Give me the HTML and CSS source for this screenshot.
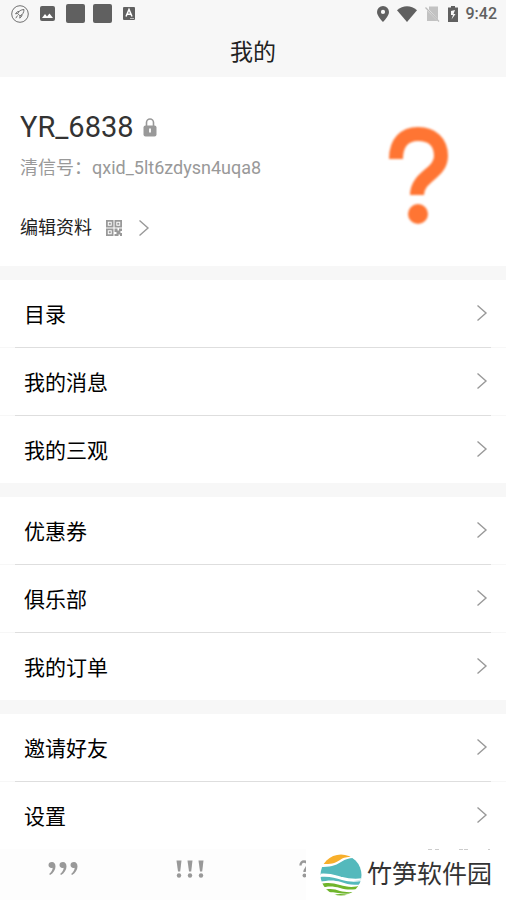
FILE: index.html
```html
<!DOCTYPE html>
<html lang="zh-CN">
<head>
<meta charset="utf-8">
<meta name="viewport" content="width=device-width, initial-scale=1">
<title>我的</title>
<link rel="stylesheet" href="styles.css">
</head>
<body>
<svg class="defs" aria-hidden="true">
  <symbol id="chevron" viewBox="0 0 12 18"><path d="M1.500 1.500 10 9l-8.500 7.500" fill="none" stroke="currentColor" stroke-width="1.400"/></symbol>
  <symbol id="comma" viewBox="0 0 10 16"><path d="M4 1C1.800 1 .5 2.300.5 4.100c0 1.700 1.200 2.900 3 2.900.5 0 .9-.1 1.200-.2-.2 2.500-1.300 4.400-3.500 6.200l.8 1C5.300 12 7.500 8.900 7.500 5.400 7.500 2.700 6.100 1 4 1z" fill="currentColor"/></symbol>
  <symbol id="bang" viewBox="0 0 8 18"><path d="M1.500.5h5L5.200 11.500H3z" fill="currentColor"/><circle cx="4" cy="15.500" r="2.200" fill="currentColor"/></symbol>
  <symbol id="query" viewBox="0 0 10 18"><path d="M1.500 5.500C1.500 3 3 1.500 5 1.500s3.500 1.400 3.500 3.600c0 3-3 3.400-3 6.900" fill="none" stroke="currentColor" stroke-width="2.400"/><circle cx="5.500" cy="15.500" r="2" fill="currentColor"/></symbol>
</svg>

<header class="header">
  <div class="status">
    <div class="status-left">
      <svg width="18" height="18" viewBox="0 0 18 18"><circle cx="9" cy="9" r="8.300" fill="none" stroke="#707070"/><path d="M13 4.500c-3 .2-5.200 1.500-6.300 4L9 10.900c2.700-1.200 3.900-3.400 4-6.400zM6.700 8.500 4.500 8.800l2-2.200 1.500-.1M9 10.900l-.2 2.300 2-2.200.2-1.600M6.500 10.500 4.800 13.200" fill="none" stroke="#707070"/></svg>
      <svg width="15" height="15" viewBox="0 0 15 15"><rect width="15" height="15" rx="2" fill="#606060"/><path d="m2 12 3-4 2 2.500L9.500 7.500 13 12z" fill="#fff"/></svg>
      <span class="blocks"><i></i><i></i></span>
      <svg width="12" height="13" viewBox="0 0 12 13"><rect width="12" height="13" rx="1" fill="#606060"/><path d="m3 9.500 3-7 3 7M4.200 7.300h3.600" fill="none" stroke="#fff" stroke-width="1.500"/><path d="M7 11.500h4" stroke="#bbb"/></svg>
    </div>
    <div class="status-right">
      <svg width="12" height="16" viewBox="0 0 12 16"><path d="M6 0a6 6 0 0 0-6 6c0 4.200 6 10 6 10s6-5.800 6-10a6 6 0 0 0-6-6zm0 3.800a2.100 2.100 0 1 1 0 4.200 2.100 2.100 0 0 1 0-4.200z" fill="#606060"/></svg>
      <svg width="20" height="16" viewBox="0 0 20 16"><path d="M0 4.200C6-1 14-1 20 4.200L10 16z" fill="#606060"/></svg>
      <svg width="15" height="16" viewBox="0 0 15 16"><path d="M4 .5h9v13L4 3.500zM2 4.500 12.500 15H2z" fill="#c2c2c2"/><path d="m.5 1.500 13.500 14" stroke="#bbb" stroke-width="1.200"/></svg>
      <svg width="10" height="16" viewBox="0 0 10 16"><path d="M3 0h4v1.500h3V16H0V1.500h3z" fill="#606060"/><path d="M7 4 3 5v4h2L3.500 13.500 7.500 8h-2z" fill="#f7f7f7"/></svg>
      <span class="clock">9:42</span>
    </div>
  </div>
  <h1 class="title">我的</h1>
</header>

<main>
  <section class="profile">
    <div class="info">
      <h2 class="name">YR_6838
        <svg width="14" height="19" viewBox="0 0 14 19"><path d="M3.500 9V4.500a3.500 3.500 0 0 1 7 0V9" fill="none" stroke="#999" stroke-width="1.600"/><rect x=".5" y="7.500" width="13" height="11" rx="2" fill="#999"/><path d="M7 10.500v4" stroke="#fff" stroke-width="1.800"/></svg>
      </h2>
      <p class="account">清信号：qxid_5lt6zdysn4uqa8</p>
      <a class="edit" href="#edit">编辑资料
        <svg class="qr" width="16" height="16" viewBox="0 0 16 16"><g fill="none" stroke="#999" stroke-width="1.800"><path d="M.9.9h5.700v5.700H.9zM9.400.9h5.700v5.700H9.400zM.9 9.400h5.700v5.700H.9z"/></g><path d="M2.800 2.800h2v2h-2zM11.300 2.800h2v2h-2zM2.800 11.300h2v2h-2zM8.500 8.500h3v2h1.500v-2h3v2.500h-1.500v2H16v3h-2v-1.500h-1.500V16h-4v-2h2v-2h-2z" fill="#999"/></svg>
        <svg class="chevron" width="12" height="18"><use href="#chevron"/></svg>
      </a>
    </div>
    <svg class="avatar" width="80" height="120" viewBox="0 0 80 120" role="img" aria-label="头像"><path d="M18 50C18 33 27 25 40 25c14 0 23 8 23 22 0 18-24 20-24 39" fill="none" stroke="#ff7533" stroke-width="14"/><circle cx="40" cy="105" r="10" fill="#ff7533"/></svg>
  </section>

  <nav class="group">
    <a class="row" href="#catalog">目录<svg class="chevron" width="12" height="18"><use href="#chevron"/></svg></a>
    <a class="row" href="#messages">我的消息<svg class="chevron" width="12" height="18"><use href="#chevron"/></svg></a>
    <a class="row" href="#views">我的三观<svg class="chevron" width="12" height="18"><use href="#chevron"/></svg></a>
  </nav>
  <nav class="group">
    <a class="row" href="#coupons">优惠券<svg class="chevron" width="12" height="18"><use href="#chevron"/></svg></a>
    <a class="row" href="#club">俱乐部<svg class="chevron" width="12" height="18"><use href="#chevron"/></svg></a>
    <a class="row" href="#orders">我的订单<svg class="chevron" width="12" height="18"><use href="#chevron"/></svg></a>
  </nav>
  <nav class="group">
    <a class="row" href="#invite">邀请好友<svg class="chevron" width="12" height="18"><use href="#chevron"/></svg></a>
    <a class="row" href="#settings">设置<svg class="chevron" width="12" height="18"><use href="#chevron"/></svg></a>
  </nav>
</main>

<footer class="tabs">
  <button class="tab" aria-label="评论"><svg width="32" height="18" viewBox="0 0 32 18"><use href="#comma" width="10" height="16" x="1" y="1"/><use href="#comma" width="10" height="16" x="12" y="1"/><use href="#comma" width="10" height="16" x="23" y="1"/></svg></button>
  <button class="tab" aria-label="动态"><svg width="30" height="18" viewBox="0 0 30 18"><use href="#bang" width="8" height="18" x="0"/><use href="#bang" width="8" height="18" x="11"/><use href="#bang" width="8" height="18" x="22"/></svg></button>
  <button class="tab" aria-label="问答"><svg width="34" height="18" viewBox="0 0 34 18"><use href="#query" width="10" height="18"/><use href="#query" width="10" height="18" x="12"/><use href="#query" width="10" height="18" x="24"/></svg></button>
  <button class="tab" aria-label="我的"></button>
  <div class="brand">
    <svg width="42" height="42" viewBox="0 0 42 42" aria-hidden="true">
      <clipPath id="disc"><circle cx="21" cy="21" r="20.500"/></clipPath>
      <g clip-path="url(#disc)">
        <path d="M0 0h42v42H0z" fill="#fff"/>
        <path d="M3 10C11 10 14 10 20 6c4-3 7-3 11-3V0H3z" fill="#f8af2b"/>
        <path d="M0 13c10 0 15-1 21-5 5-3 8-4 12-4l9 6v16c-8 1-14-1-22-3-7-2-13-3-20-2z" fill="#54b9bc"/>
        <path d="M0 23c9-1 15 1 22 3 7 2 13 2 20 1v3c-9 2-15 0-21-2-7-2-13-2-21 0z" fill="#54b9bc"/>
        <path d="M0 20.500c9-1 14 1 21 3 8 2 13 2.500 21 1.500" fill="none" stroke="#fff" stroke-width="1.500"/>
        <path d="M0 30c8-2 13-1 20 1 7 2 13 3 22 0v3c-9 2-15 2-22 0-7-2-12-2-20 0z" fill="#6fb52c"/>
        <path d="M3 36c7-2 12-1 17 1 5 1 10 2 19 0l-3 2c-7 1-13 1-18 0-5-1-8-1-12 0zM14 41c4-1.500 9-1 15 0v2H14z" fill="#6fb52c"/>
      </g>
    </svg>
    <span>竹笋软件园</span>
    <svg class="specks" width="64" height="2" viewBox="0 0 64 2" aria-hidden="true"><path d="M0 .5h4M7 .5h4M31 .5h4M36 .5h4M60 .5h2" stroke="#ccc"/></svg>
  </div>
</footer>
</body>
</html>
```
FILE: styles.css
```css
* { box-sizing: border-box; }
body {
  margin: 0;
  background: #f7f7f7;
  color: #000;
  font-family: Roboto, "Noto Sans CJK SC", sans-serif;
}
a { color: inherit; text-decoration: none; }
h1, h2, p { margin: 0; font-weight: 400; }
svg { display: block; flex: none; }
.defs { display: none; }

.header { background: #f7f7f7; }
.status {
  display: flex;
  justify-content: space-between;
  align-items: center;
  height: 27px;
  padding: 0 9px 0 11px;
}
.status-left { display: flex; align-items: center; gap: 11px; }
.blocks { display: flex; gap: 8px; }
.blocks i { width: 19px; height: 19px; border-radius: 2px; background: #606060; }
.status-right { display: flex; align-items: center; gap: 8px; }
.clock { color: #606060; font-size: 16px; font-weight: 500; line-height: 20px; }
.title {
  padding-top: 2px;
  color: #222;
  font-size: 23px;
  line-height: 48px;
  text-align: center;
}

.profile {
  display: flex;
  justify-content: space-between;
  align-items: flex-start;
  padding: 32px 48px 24px 20px;
  background: #fff;
}
.name {
  display: flex;
  align-items: center;
  gap: 9px;
  color: #333;
  font-size: 29px;
  line-height: 36px;
}
.account { margin-top: 10px; color: #999; font-size: 18px; line-height: 26px; }
.edit {
  display: flex;
  align-items: center;
  margin-top: 33px;
  color: #222;
  font-size: 18px;
  line-height: 28px;
}
.qr { margin: 0 16px 0 14px; }
.chevron { color: #999; }
.avatar { filter: blur(1px); }

.group { margin-top: 14px; background: #fff; }
.row {
  display: flex;
  justify-content: space-between;
  align-items: center;
  height: 67px;
  padding: 0 18px 1px 24px;
  font-size: 21px;
}
.row + .row {
  height: 68px;
  border-top: 1px solid #dedede;
  border-image: linear-gradient(to right, #f7f7f7 16px, #dedede 16px calc(100% - 16px), #f7f7f7 calc(100% - 16px)) 1;
}

.tabs {
  position: sticky;
  bottom: 0;
  display: flex;
  height: 51px;
  background: #fdfdfd;
}
.tab {
  display: flex;
  flex: 1;
  justify-content: center;
  align-items: center;
  padding: 0 0 11px;
  border: 0;
  background: none;
  color: #999;
}
.brand {
  position: absolute;
  right: 0;
  bottom: 0;
  display: flex;
  align-items: center;
  gap: 5px;
  height: 51px;
  padding: 0 14px;
  background: #fff;
  color: #333;
  font-size: 25px;
  line-height: 48px;
}
.specks { position: absolute; top: 0; right: 14px; }
```
